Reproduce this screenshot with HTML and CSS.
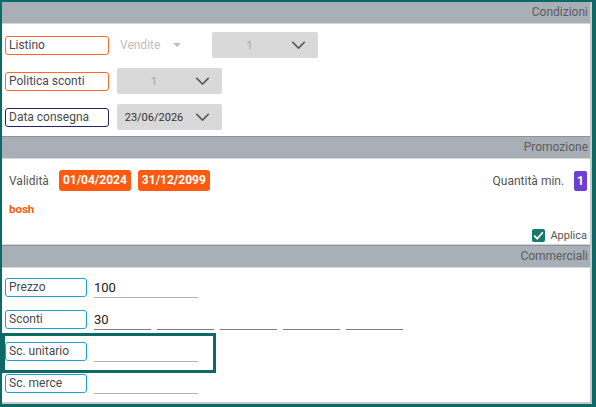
FILE: index.html
```html
<!DOCTYPE html>
<html lang="it">
<head>
    <meta charset="UTF-8">
    <title>Riga ordine</title>
    <link rel="stylesheet" href="styles.css">
</head>
<body>
<div class="panel">
    <div class="section-head first">Condizioni</div>
    <div class="section-body cond">
        <div class="row">
            <div class="tag orange">Listino</div>
            <div class="plain-select">Vendite <span class="caret"></span></div>
            <div class="gray-select wide"><span class="val muted">1</span><svg class="chev" viewBox="0 0 16 9"><path d="M1 1 L8 8 L15 1"/></svg></div>
        </div>
        <div class="row">
            <div class="tag orange">Politica sconti</div>
            <div class="gray-select"><span class="val muted">1</span><svg class="chev" viewBox="0 0 16 9"><path d="M1 1 L8 8 L15 1"/></svg></div>
        </div>
        <div class="row">
            <div class="tag navy">Data consegna</div>
            <div class="gray-select"><span class="val">23/06/2026</span><svg class="chev" viewBox="0 0 16 9"><path d="M1 1 L8 8 L15 1"/></svg></div>
        </div>
    </div>

    <div class="section-head">Promozione</div>
    <div class="section-body promo">
        <div class="promo-top">
            <span class="lbl">Validità</span>
            <span class="badge">01/04/2024</span>
            <span class="badge">31/12/2099</span>
            <span class="spacer"></span>
            <span class="lbl">Quantità min.</span>
            <span class="badge purple">1</span>
        </div>
        <div class="promo-name">bosh</div>
        <div class="apply">
            <span class="check"><svg viewBox="0 0 12 12"><path d="M2 6.2 L4.8 9 L10 3"/></svg></span>
            <span>Applica</span>
        </div>
    </div>

    <div class="section-head">Commerciali</div>
    <div class="section-body comm">
        <div class="row">
            <div class="tag blue">Prezzo</div>
            <div class="field">100</div>
        </div>
        <div class="row">
            <div class="tag blue">Sconti</div>
            <div class="field short dark">30</div>
            <div class="field short dark"></div>
            <div class="field short dark"></div>
            <div class="field short dark"></div>
            <div class="field short dark"></div>
        </div>
        <div class="row focused">
            <div class="tag blue">Sc. unitario</div>
            <div class="field"></div>
        </div>
        <div class="row">
            <div class="tag blue">Sc. merce</div>
            <div class="field"></div>
        </div>
    </div>
</div>
</body>
</html>
```

FILE: styles.css
```css
body {
    margin: 0;
    background-color: #0b6a65;
    font-family: Roboto, "Noto Sans", sans-serif;
    color: #444;
}
.panel {
    margin: 2px 4px 0 2px;
    height: 400px;
    background-color: #fff;
    border-right: 2px solid #c7c9cc;
    border-bottom: 2px solid #c7c9cc;
    overflow: hidden;
}
.section-head {
    height: 21px;
    line-height: 21px;
    background-color: #a9afb6;
    border-top: 1px solid #8e9399;
    border-bottom: 1px solid #d3d6d9;
    text-align: right;
    padding-right: 2px;
    font-size: 12px;
    color: #5a5d61;
}
.section-head.first {
    border-top: none;
}

/* condizioni */
.cond {
    height: 112px;
    box-sizing: border-box;
    padding: 8px 0 0 3px;
}
.row {
    display: flex;
    align-items: center;
}
.cond .row {
    height: 26px;
    margin-bottom: 10px;
}
.tag {
    box-sizing: border-box;
    height: 19px;
    line-height: 16px;
    width: 104px;
    padding-left: 3px;
    border: 1.5px solid #ff6a2b;
    border-radius: 3px;
    font-size: 12px;
    color: #4a4a4a;
    margin-right: 8px;
}
.tag.navy {
    border-color: #222760;
}
.tag.blue {
    width: 82px;
    border-color: #1d9fd6;
    margin-right: 7px;
}
.plain-select {
    width: 92px;
    font-size: 12px;
    color: #bdbdbd;
    padding-left: 3px;
    display: flex;
    align-items: center;
}
.caret {
    margin-left: 13px;
    width: 0;
    height: 0;
    border-left: 4px solid transparent;
    border-right: 4px solid transparent;
    border-top: 4px solid #bdbdbd;
}
.gray-select {
    width: 105px;
    height: 26px;
    background-color: #d9d9d9;
    border-radius: 2px;
    display: flex;
    align-items: center;
}
.gray-select.wide {
    width: 106px;
}
.val {
    flex: 1;
    text-align: center;
    font-size: 11px;
    color: #333;
    padding-left: 2px;
}
.val.muted {
    color: #a8a8a8;
}
.chev {
    width: 15px;
    height: 8px;
    margin: 0 12px 0 6px;
    fill: none;
    stroke: #5a5a5a;
    stroke-width: 1.8;
}

/* promozione */
.promo {
    height: 86px;
    box-sizing: border-box;
    padding: 11px 3px 0 7px;
    border-bottom: 1px solid #d3d6d9;
}
.promo-top {
    display: flex;
    align-items: center;
    height: 21px;
}
.lbl {
    font-size: 12px;
    color: #555;
    margin-right: 10px;
}
.badge {
    background-color: #ff5a10;
    color: #fff;
    font-weight: bold;
    font-size: 12px;
    height: 21px;
    line-height: 21px;
    padding: 0 4px;
    border-radius: 3px;
    margin-right: 7px;
}
.badge.purple {
    background-color: #6b3fd2;
    padding: 0 3px;
    margin-right: 0;
    height: 20px;
    line-height: 20px;
    border-radius: 2px;
}
.spacer {
    flex: 1;
}
.promo-name {
    margin-top: 11px;
    font-size: 11.5px;
    font-weight: bold;
    color: #ff5a10;
}
.apply {
    display: flex;
    justify-content: flex-end;
    align-items: center;
    margin-top: 13px;
    font-size: 11px;
    color: #555;
}
.check {
    width: 13px;
    height: 13px;
    background-color: #17796b;
    border-radius: 2px;
    margin-right: 5px;
    display: flex;
}
.check svg {
    width: 13px;
    height: 13px;
    fill: none;
    stroke: #fff;
    stroke-width: 1.7;
}

/* commerciali */
.comm {
    padding: 10px 0 0 3px;
}
.comm .row {
    height: 19px;
    margin-bottom: 13px;
    position: relative;
}
.field {
    width: 104px;
    height: 19px;
    box-sizing: border-box;
    border-bottom: 1px solid #b5b5b5;
    font-size: 13px;
    color: #222;
    line-height: 18px;
    margin-top: 2px;
}
.field.short {
    width: 57px;
    margin-right: 6px;
}
.field.dark {
    border-bottom-color: #7d7d7d;
}
.row.focused::after {
    content: "";
    position: absolute;
    left: -3px;
    top: -9px;
    width: 208px;
    height: 34px;
    border: 3px solid #0b6a65;
}
```
